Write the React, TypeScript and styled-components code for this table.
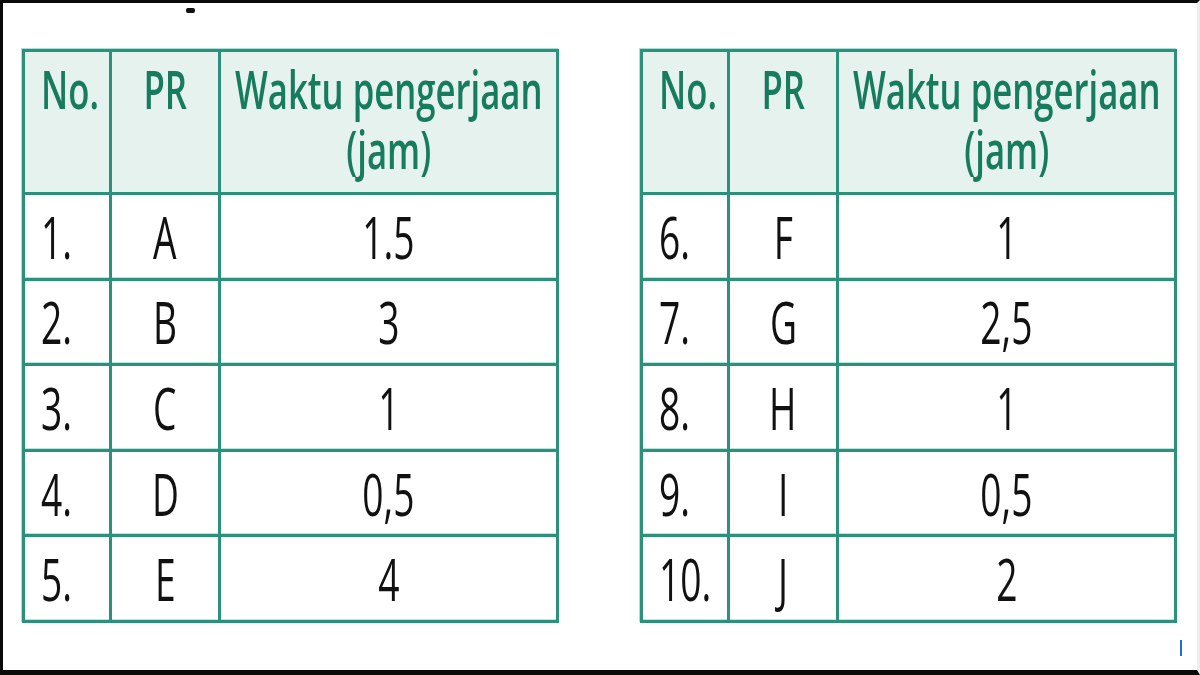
import React from "react";
import styled, { createGlobalStyle } from "styled-components";

const Global = createGlobalStyle`
  html, body { margin: 0; padding: 0; background: #ffffff; }
  #root { width: 1200px; height: 675px; }
`;

const Frame = styled.div`
  position: relative;
  box-sizing: border-box;
  width: 1200px;
  height: 675px;
  background: #ffffff;
  border-top: 3px solid #0a0a0a;
  border-left: 3px solid #0a0a0a;
  border-bottom: 5px solid #0a0a0a;
  border-right: 3px solid #ededed;
  padding: 46px 0 0 19px;
  display: flex;
  align-items: flex-start;
  gap: 81px;
  font-family: "Open Sans", "Noto Sans", sans-serif;
`;

const Dash = styled.div`
  position: absolute;
  left: 183px;
  top: 5px;
  width: 9px;
  height: 5px;
  border-radius: 2px;
  background: #111;
  filter: blur(0.6px);
`;

const Caret = styled.div`
  position: absolute;
  left: 1177px;
  top: 637px;
  width: 2px;
  height: 16px;
  background: #1a6fe6;
`;

const Table = styled.div`
  display: grid;
  grid-template-columns: 87px 109px 338px;
  grid-template-rows: 143px repeat(5, 85.6px);
  border-left: 3px solid #2b917b;
  border-top: 3px solid #2b917b;
  box-shadow: -1px -1px 0 #a6e2d7;
`;

const Cell = styled.div<{ $head?: boolean; $left?: boolean }>`
  box-sizing: border-box;
  border-right: 3px solid #2b917b;
  border-bottom: 3px solid #2b917b;
  box-shadow: ${(p) => (p.$head ? "none" : "inset 0 -1px 0 #b5e8df")};
  background: ${(p) => (p.$head ? "#e5f2ee" : "#ffffff")};
  display: flex;
  flex-direction: column;
  align-items: ${(p) => (p.$left ? "flex-start" : "center")};
  justify-content: ${(p) => (p.$head ? "flex-start" : "center")};
  padding: ${(p) => (p.$head ? "7px 0 0" : "0")};
  padding-left: ${(p) => (p.$left ? "16px" : "0")};
  overflow: hidden;
`;

const HeadText = styled.span<{ $left?: boolean }>`
  display: inline-block;
  white-space: nowrap;
  text-align: center;
  color: #177b5d;
  font-weight: 600;
  font-size: 53px;
  line-height: 60px;
  letter-spacing: 0;
  transform: scaleX(0.655);
  transform-origin: ${(p) => (p.$left ? "left center" : "center center")};
`;

const BodyText = styled.span<{ $left?: boolean }>`
  display: inline-block;
  white-space: nowrap;
  color: #111111;
  font-weight: 500;
  font-size: 59px;
  line-height: 1;
  transform: scaleX(0.63);
  transform-origin: ${(p) => (p.$left ? "left center" : "center center")};
`;

type Row = [string, string, string];

const left: Row[] = [
  ["1.", "A", "1.5"],
  ["2.", "B", "3"],
  ["3.", "C", "1"],
  ["4.", "D", "0,5"],
  ["5.", "E", "4"],
];

const right: Row[] = [
  ["6.", "F", "1"],
  ["7.", "G", "2,5"],
  ["8.", "H", "1"],
  ["9.", "I", "0,5"],
  ["10.", "J", "2"],
];

function DataTable({ rows }: { rows: Row[] }) {
  return (
    <Table>
      <Cell $head $left>
        <HeadText $left>No.</HeadText>
      </Cell>
      <Cell $head>
        <HeadText>PR</HeadText>
      </Cell>
      <Cell $head>
        <HeadText>
          Waktu pengerjaan
          <br />
          (jam)
        </HeadText>
      </Cell>
      {rows.map((r) => (
        <React.Fragment key={r[0]}>
          <Cell $left>
            <BodyText $left>{r[0]}</BodyText>
          </Cell>
          <Cell>
            <BodyText>{r[1]}</BodyText>
          </Cell>
          <Cell>
            <BodyText>{r[2]}</BodyText>
          </Cell>
        </React.Fragment>
      ))}
    </Table>
  );
}

export default function App() {
  return (
    <>
      <Global />
      <Frame>
        <Dash />
        <DataTable rows={left} />
        <DataTable rows={right} />
        <Caret />
      </Frame>
    </>
  );
}
